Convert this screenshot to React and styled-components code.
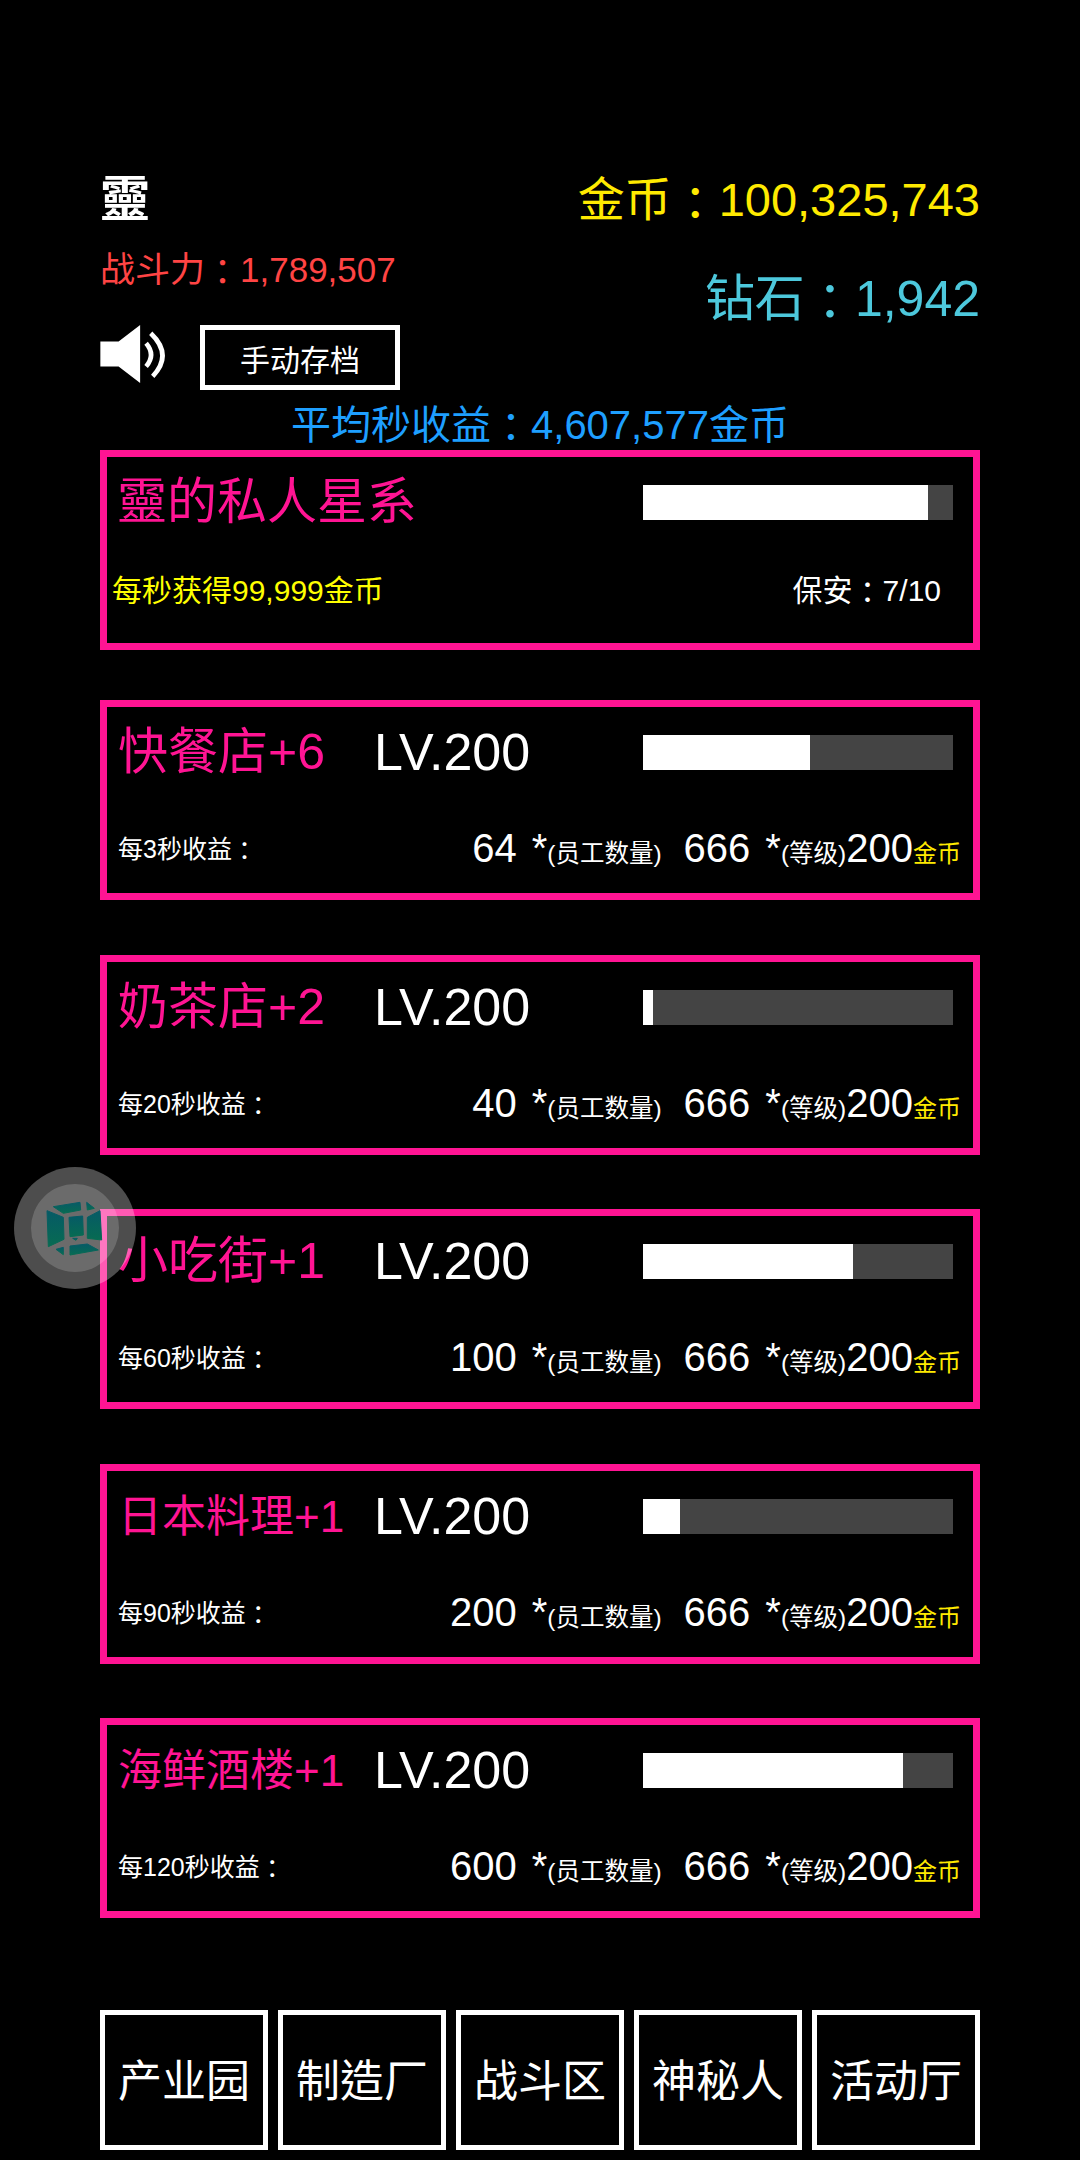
import React from 'react';
import styled, { createGlobalStyle } from 'styled-components';

const GlobalStyle = createGlobalStyle`
  html, body {
    margin: 0;
    padding: 0;
    background: #000;
  }
  body {
    font-family: "Liberation Sans", "Noto Sans CJK TC", sans-serif;
    color: #fff;
  }
`;

const Page = styled.div`
  position: relative;
  box-sizing: border-box;
  width: 1080px;
  height: 2160px;
  padding: 160px 100px 0;
  overflow: hidden;
  background: #000;
`;

const Header = styled.div`
  display: flex;
  justify-content: space-between;
  align-items: flex-start;
`;

const Column = styled.div`
  display: flex;
  flex-direction: column;
  align-items: ${({ $right }) => ($right ? 'flex-end' : 'flex-start')};
`;

const PlayerName = styled.div`
  font-size: 50px;
  font-weight: bold;
  line-height: 80px;
  height: 80px;
`;

const Power = styled.div`
  margin-top: 10px;
  margin-bottom: -1px;
  font-size: 35px;
  line-height: 40px;
  color: #ff4444;
`;

// the full-width colon sits a little lower in the reference
const Colon = styled.span`
  display: inline-block;
  transform: translateY(0.08em);
`;

const Controls = styled.div`
  display: flex;
  align-items: flex-start;
  gap: 33px;
  margin-top: 36px;
`;

const SaveButton = styled.div`
  box-sizing: border-box;
  display: flex;
  align-items: center;
  justify-content: center;
  width: 200px;
  height: 65px;
  border: 5px solid #fff;
  font-size: 30px;
`;

const Gold = styled.div`
  font-size: 47px;
  line-height: 80px;
  color: #ffea00;
`;

const Diamond = styled.div`
  margin-top: 34px;
  font-size: 50px;
  line-height: 50px;
  color: #4dc8dc;
`;

const Income = styled.div`
  margin-top: 15px;
  font-size: 40px;
  line-height: 40px;
  text-align: center;
  color: #1e9fff;
`;

const CardList = styled.div`
  display: flex;
  flex-direction: column;
  gap: 54.5px;
  margin-top: 5px;
`;

const Card = styled.div`
  box-sizing: border-box;
  display: flex;
  flex-direction: column;
  height: 200px;
  border: 7px solid #ff1493;
  padding-top: 28px;
`;

const HomeCard = styled(Card)`
  margin-bottom: -4.5px;
`;

const TopRow = styled.div`
  display: flex;
  align-items: center;
  height: 35px;
`;

const Title = styled.div`
  flex: 0 0 266px;
  box-sizing: border-box;
  padding-left: 11px;
  font-size: ${({ $small }) => ($small ? '44px' : '50px')};
  line-height: 37px;
  white-space: nowrap;
  color: #ff1493;
`;

const HomeTitle = styled(Title)`
  flex: 0 0 536px;
  padding-left: 10px;
`;

const Level = styled.div`
  flex: 0 0 270px;
  padding-left: 1px;
  box-sizing: border-box;
  font-size: 52px;
  line-height: 37px;
`;

const Track = styled.div`
  flex: 0 0 310px;
  height: 35px;
  background: #444;
`;

const Fill = styled.div`
  height: 100%;
  background: #fff;
`;

const BottomRow = styled.div`
  display: flex;
  align-items: center;
  justify-content: space-between;
  height: 40px;
  margin-top: 60px;
`;

const HomeRow = styled(BottomRow)`
  margin-top: 48px;
`;

const Label = styled.div`
  padding-left: 11px;
  padding-bottom: 6px;
  font-size: 25px;
`;

const Values = styled.div`
  display: flex;
  align-items: baseline;
  margin-right: 12px;
  margin-top: 2px;
  line-height: 40px;
`;

const Num = styled.span`
  font-size: 40px;
  margin-left: ${({ $spaced }) => ($spaced ? '22px' : '0')};
`;

const Star = styled.span`
  font-size: 40px;
  margin-left: 15px;
`;

const Small = styled.span`
  font-size: 24.5px;
`;

const Coin = styled.span`
  font-size: 24px;
  color: #ffea00;
`;

const HomeEarn = styled.div`
  padding-left: 5px;
  font-size: 30px;
  color: #ffff00;
`;

const Guard = styled.div`
  padding-right: 32px;
  font-size: 30px;
`;

const Nav = styled.div`
  display: flex;
  gap: 10px;
  margin-top: 92px;
`;

const NavItem = styled.div`
  box-sizing: border-box;
  display: flex;
  align-items: center;
  justify-content: center;
  flex: 0 0 168px;
  height: 140px;
  padding-bottom: 4px;
  border: 5px solid #fff;
  font-size: 44px;
  white-space: nowrap;
`;

const Ball = styled.div`
  position: absolute;
  left: 14px;
  top: 1167px;
  display: flex;
  align-items: center;
  justify-content: center;
  width: 122px;
  height: 122px;
  border-radius: 50%;
  background: rgba(255, 255, 255, 0.3);
`;

const BallInner = styled.div`
  display: flex;
  width: 88px;
  height: 88px;
  border-radius: 50%;
  background: rgba(255, 255, 255, 0.171);
`;

const BallIcon = styled.svg`
  position: absolute;
  inset: 0;
  width: 122px;
  height: 122px;
`;

const SpeakerIcon = () => (
  <svg width="67" height="58" viewBox="30 30 200 175">
    <polygon points="30,80 85,80 150,30 150,205 85,155 30,155" fill="#fff" />
    <path d="M168 85 Q198 120 168 155" fill="none" stroke="#fff" strokeWidth="14" />
    <path d="M182 55 Q250 120 188 185" fill="none" stroke="#fff" strokeWidth="14" />
  </svg>
);

const CubeIcon = () => (
  <BallIcon viewBox="42 81 366 366">
    <defs>
      <linearGradient id="cube" x1="0" y1="0" x2="0" y2="1">
        <stop offset="0" stopColor="#065a66" />
        <stop offset="1" stopColor="#076b52" />
      </linearGradient>
    </defs>
    <g fill="url(#cube)" stroke="url(#cube)" strokeWidth="3" strokeLinejoin="round">
      <polygon points="141,212 190,232 192,298 145,320" />
      <polygon points="160,200 240,187 242,210 190,220" />
      <polygon points="260,187 283,205 262,210" />
      <polygon points="262,232 300,212 305,300 262,295" />
      <polygon points="207,232 248,228 250,285 210,290" />
      <polygon points="218,295 232,295 228,301" />
      <polygon points="168,328 190,322 190,344" />
      <polygon points="210,318 262,312 295,330 210,345" />
    </g>
  </BallIcon>
);

const shops = [
  { name: '快餐店+6', fill: 54, label: '每3秒收益', staff: 64 },
  { name: '奶茶店+2', fill: 3.2, label: '每20秒收益', staff: 40 },
  { name: '小吃街+1', fill: 67.7, label: '每60秒收益', staff: 100 },
  { name: '日本料理+1', small: true, fill: 12, label: '每90秒收益', staff: 200 },
  { name: '海鲜酒楼+1', small: true, fill: 84, label: '每120秒收益', staff: 600 },
];

const navItems = ['产业园', '制造厂', '战斗区', '神秘人', '活动厅'];

const App = () => (
  <Page>
    <GlobalStyle />
    <Header>
      <Column>
        <PlayerName>靈</PlayerName>
        <Power>战斗力<Colon>：</Colon>1,789,507</Power>
        <Controls>
          <SpeakerIcon />
          <SaveButton>手动存档</SaveButton>
        </Controls>
      </Column>
      <Column $right>
        <Gold>金币<Colon>：</Colon>100,325,743</Gold>
        <Diamond>钻石<Colon>：</Colon>1,942</Diamond>
      </Column>
    </Header>
    <Income>平均秒收益<Colon>：</Colon>4,607,577金币</Income>

    <CardList>
      <HomeCard>
        <TopRow>
          <HomeTitle>靈的私人星系</HomeTitle>
          <Track>
            <Fill style={{ width: '92%' }} />
          </Track>
        </TopRow>
        <HomeRow>
          <HomeEarn>每秒获得99,999金币</HomeEarn>
          <Guard>保安<Colon>：</Colon>7/10</Guard>
        </HomeRow>
      </HomeCard>

      {shops.map((shop) => (
        <Card key={shop.name}>
          <TopRow>
            <Title $small={shop.small}>{shop.name}</Title>
            <Level>LV.200</Level>
            <Track>
              <Fill style={{ width: `${shop.fill}%` }} />
            </Track>
          </TopRow>
          <BottomRow>
            <Label>{shop.label}<Colon>：</Colon></Label>
            <Values>
              <Num>{shop.staff}</Num>
              <Star>*</Star>
              <Small>(员工数量)</Small>
              <Num $spaced>666</Num>
              <Star>*</Star>
              <Small>(等级)</Small>
              <Num>200</Num>
              <Coin>金币</Coin>
            </Values>
          </BottomRow>
        </Card>
      ))}
    </CardList>

    <Nav>
      {navItems.map((item) => (
        <NavItem key={item}>{item}</NavItem>
      ))}
    </Nav>

    <Ball>
      <BallInner />
      <CubeIcon />
    </Ball>
  </Page>
);

export default App;
